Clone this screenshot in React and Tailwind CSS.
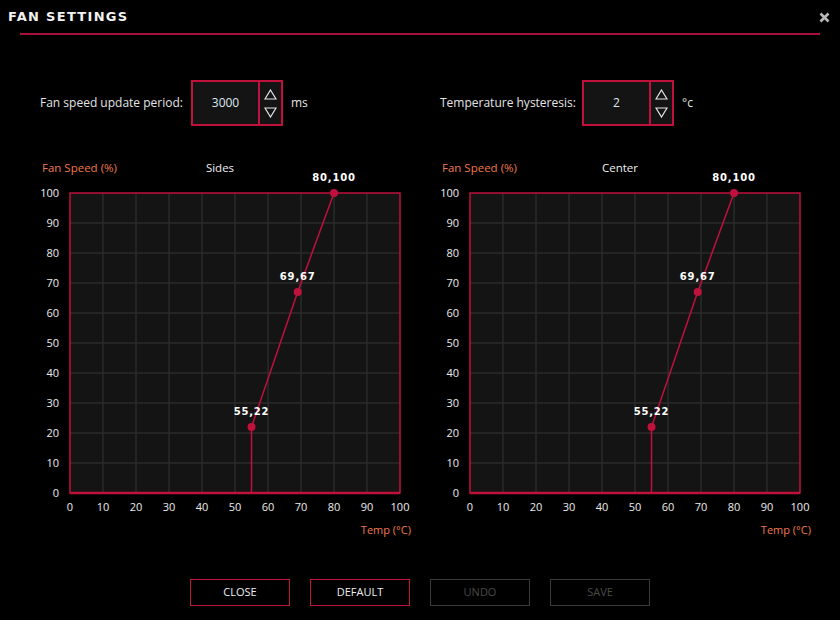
import React from 'react';

const RED = '#c0103c';

function Spinner() {
  return (
    <div className="w-[21px] flex flex-col items-center justify-center gap-[7px]">
      <svg width="13" height="11" viewBox="0 0 13 11">
        <path d="M6.5 1 L12 10 L1 10 Z" fill="none" stroke="#e6e6e6" strokeWidth="1.2" />
      </svg>
      <svg width="13" height="11" viewBox="0 0 13 11">
        <path d="M1 1 L12 1 L6.5 10 Z" fill="none" stroke="#e6e6e6" strokeWidth="1.2" />
      </svg>
    </div>
  );
}

function NumberField({ label, value, unit, labelClass }) {
  return (
    <div className="w-[400px] pl-10 flex items-center">
      <span className={'text-[12px] text-[#e4e4e4] ' + labelClass}>{label}</span>
      <div className="flex h-[46px] w-[92px] border-2 border-[#c0103c] bg-[#141414]">
        <div className="w-[67px] flex items-center justify-center text-[12px] text-[#dfe8f2]">{value}</div>
        <div className="border-l-2 border-[#c0103c] flex">
          <Spinner />
        </div>
      </div>
      <span className="ml-[8px] text-[12px] text-[#e4e4e4]">{unit}</span>
    </div>
  );
}

function Chart({ title, points }) {
  const x0 = 70, y0 = 43, w = 330, h = 300;
  const px = (t) => x0 + t * 3.3;
  const py = (s) => y0 + h - s * 3;
  const ticks = [0, 10, 20, 30, 40, 50, 60, 70, 80, 90, 100];
  const path = [`M${px(points[0][0])} ${y0 + h}`]
    .concat(points.map(([t, s]) => `L${px(t)} ${py(s)}`))
    .join(' ');

  return (
    <div className="w-[400px] shrink-0">
      <svg width="400" height="390" className="overflow-visible" style={{ fontFamily: '"Open Sans", sans-serif' }}>
        <text x="42" y="22" fontSize="11.5" fill="#f07848">Fan Speed (%)</text>
        <text x="220" y="22" fontSize="11.5" fill="#f0f0f0" textAnchor="middle">{title}</text>
        <rect x={x0} y={y0} width={w} height={h} fill="#141414" />
        {ticks.slice(1, -1).map((v) => (
          <g key={v}>
            <line x1={px(v)} y1={y0} x2={px(v)} y2={y0 + h} stroke="#2a2a2a" strokeWidth="1.5" />
            <line x1={x0} y1={py(v)} x2={x0 + w} y2={py(v)} stroke="#2a2a2a" strokeWidth="1.5" />
          </g>
        ))}
        <rect x={x0} y={y0} width={w} height={h} fill="none" stroke={RED} strokeWidth="1.5" />
        <line x1={x0} y1={y0 + h} x2={x0 + w} y2={y0 + h} stroke={RED} strokeWidth="2.5" />
        {ticks.map((v) => (
          <text key={'y' + v} x="59" y={py(v) + 4} fontSize="11" fill="#ececec" textAnchor="end">{v}</text>
        ))}
        {ticks.map((v) => (
          <text key={'x' + v} x={px(v)} y="361" fontSize="11" fill="#ececec" textAnchor="middle">{v}</text>
        ))}
        <text x="411" y="384" fontSize="11" fill="#f07848" textAnchor="end">Temp (°C)</text>
        <path d={path} fill="none" stroke={RED} strokeWidth="1.5" />
        {points.map(([t, s]) => (
          <g key={t}>
            <circle cx={px(t)} cy={py(s)} r="4" fill={RED} />
            <text
              x={px(t)}
              y={py(s) - 12}
              fontSize="10"
              fontWeight="bold"
              fill="#ffffff"
              textAnchor="middle"
              letterSpacing="0.8"
              style={{ fontFamily: '"DejaVu Sans", sans-serif' }}
            >
              {t},{s}
            </text>
          </g>
        ))}
      </svg>
    </div>
  );
}

function Button({ children, disabled }) {
  return (
    <button
      className={
        'w-[100px] h-[27px] border text-[11px] ' +
        (disabled ? 'border-[#3a3a3a] text-[#4a4a4a]' : 'border-[#c0103c] text-[#eeeeee]')
      }
    >
      {children}
    </button>
  );
}

export default function App() {
  const pts = [[55, 22], [69, 67], [80, 100]];
  return (
    <div className="w-[840px] h-[620px] bg-black overflow-hidden" style={{ fontFamily: '"Open Sans", sans-serif' }}>
      {/* Header */}
      <div className="flex justify-between items-center pl-2 pr-[10px] pt-[8px] h-[26px]">
        <span
          className="text-[13px] font-bold tracking-[1.3px] text-[#f2f2f2]"
          style={{ fontFamily: '"DejaVu Sans", sans-serif' }}
        >
          FAN SETTINGS
        </span>
        <svg width="11" height="11" viewBox="0 0 11 11">
          <path d="M1.5 1.5 L9.5 9.5 M9.5 1.5 L1.5 9.5" stroke="#b8b8b8" strokeWidth="2.6" />
        </svg>
      </div>
      <div className="mx-5 mt-[7px] h-[2px] bg-[#a8123a]" />

      {/* Inputs */}
      <div className="flex mt-[45px]">
        <NumberField label="Fan speed update period:" value="3000" unit="ms" labelClass="w-[151px]" />
        <NumberField label="Temperature hysteresis:" value="2" unit="°c" labelClass="w-[142px]" />
      </div>

      {/* Charts */}
      <div className="flex mt-[24px]">
        <Chart title="Sides" points={pts} />
        <Chart title="Center" points={pts} />
      </div>

      {/* Buttons */}
      <div className="flex justify-center gap-5 mt-[39px]">
        <Button>CLOSE</Button>
        <Button>DEFAULT</Button>
        <Button disabled>UNDO</Button>
        <Button disabled>SAVE</Button>
      </div>
    </div>
  );
}
